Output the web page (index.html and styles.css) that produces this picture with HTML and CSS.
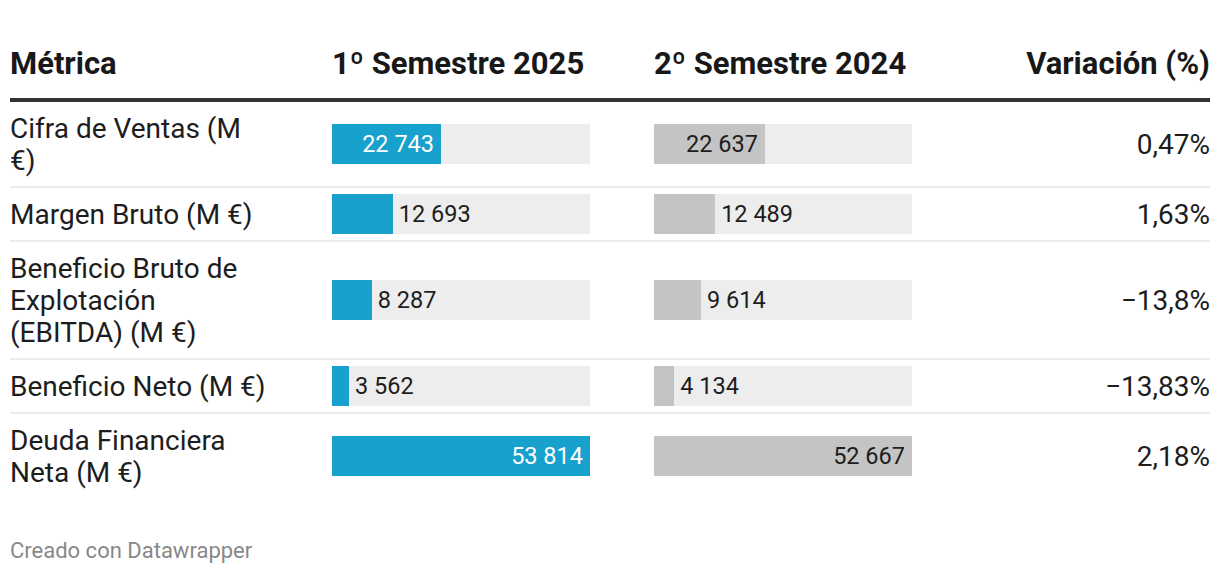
FILE: index.html
```html
<!DOCTYPE html>
<html lang="es">
<head>
<meta charset="utf-8">
<title>Tabla</title>
<link rel="stylesheet" href="styles.css">
</head>
<body>
<div class="chart">
  <div class="table">
    <div class="row head">
      <div class="cell label">Métrica</div>
      <div class="cell barcol">1º Semestre 2025</div>
      <div class="cell barcol">2º Semestre 2024</div>
      <div class="cell num">Variación (%)</div>
    </div>

    <div class="row">
      <div class="cell label">Cifra de Ventas (M €)</div>
      <div class="cell barcol"><div class="track"><div class="bar blue" style="width:42.26%"><span class="in light">22 743</span></div></div></div>
      <div class="cell barcol"><div class="track"><div class="bar gray" style="width:42.98%"><span class="in">22 637</span></div></div></div>
      <div class="cell num">0,47%</div>
    </div>

    <div class="row">
      <div class="cell label">Margen Bruto (M €)</div>
      <div class="cell barcol"><div class="track"><div class="bar blue" style="width:23.59%"></div><span class="out">12 693</span></div></div>
      <div class="cell barcol"><div class="track"><div class="bar gray" style="width:23.71%"></div><span class="out">12 489</span></div></div>
      <div class="cell num">1,63%</div>
    </div>

    <div class="row">
      <div class="cell label">Beneficio Bruto de Explotación (EBITDA) (M €)</div>
      <div class="cell barcol"><div class="track"><div class="bar blue" style="width:15.40%"></div><span class="out">8 287</span></div></div>
      <div class="cell barcol"><div class="track"><div class="bar gray" style="width:18.25%"></div><span class="out">9 614</span></div></div>
      <div class="cell num">−13,8%</div>
    </div>

    <div class="row">
      <div class="cell label">Beneficio Neto (M €)</div>
      <div class="cell barcol"><div class="track"><div class="bar blue" style="width:6.62%"></div><span class="out">3 562</span></div></div>
      <div class="cell barcol"><div class="track"><div class="bar gray" style="width:7.85%"></div><span class="out">4 134</span></div></div>
      <div class="cell num">−13,83%</div>
    </div>

    <div class="row last">
      <div class="cell label">Deuda Financiera Neta (M €)</div>
      <div class="cell barcol"><div class="track"><div class="bar blue" style="width:100%"><span class="in light">53 814</span></div></div></div>
      <div class="cell barcol"><div class="track"><div class="bar gray" style="width:100%"><span class="in">52 667</span></div></div></div>
      <div class="cell num">2,18%</div>
    </div>
  </div>
  <div class="footer">Creado con Datawrapper</div>
</div>
</body>
</html>
```

FILE: styles.css
```css
html, body {
  margin: 0;
  padding: 0;
  background: #ffffff;
}

body {
  font-family: Roboto, "Liberation Sans", sans-serif;
  color: #1d1d1d;
}

.chart {
  padding: 0 10px;
}

.table {
  display: flex;
  flex-direction: column;
}

.row {
  display: grid;
  grid-template-columns: 322px 322px 1fr 234px;
  align-items: center;
  border-bottom: 2px solid #ececec;
}

.row.last {
  border-bottom: none;
}

.cell {
  padding: 11px 0 9px;
  font-size: 28px;
  line-height: 32px;
}

.cell.barcol {
  padding: 6px 0;
}

.row.head {
  border-bottom: 4px solid #333333;
  align-items: end;
}

.row.head .cell {
  padding: 46px 0 17px;
  font-size: 31px;
  line-height: 35px;
  font-weight: 700;
  color: #181818;
}

.label {
  padding-right: 60px;
}

.row .num {
  text-align: right;
  font-variant-numeric: tabular-nums;
}

.track {
  width: 258px;
  height: 40px;
  background: #ededed;
  display: flex;
  align-items: center;
}

.bar {
  height: 40px;
  display: flex;
  align-items: center;
  justify-content: flex-end;
  flex: none;
}

.bar.blue {
  background: #18a1cd;
}

.bar.gray {
  background: #c4c4c4;
}

.in {
  padding-right: 7px;
  font-size: 23.5px;
  color: #1d1d1d;
}

.in.light {
  color: #ffffff;
}

.out {
  margin-left: 6px;
  font-size: 23.5px;
  color: #1d1d1d;
}

.footer {
  margin-top: 41px;
  font-size: 22px;
  line-height: 24px;
  color: #888888;
}
```
